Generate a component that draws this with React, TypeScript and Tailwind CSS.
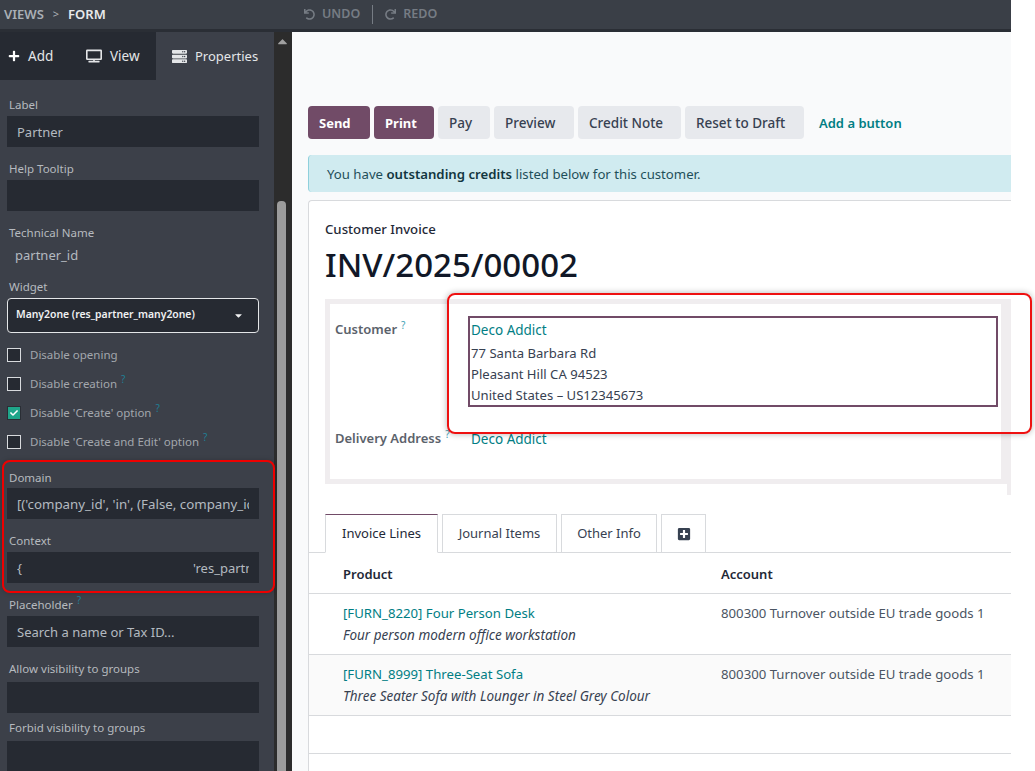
import { FaPlus, FaTv, FaServer, FaUndo, FaRedo, FaPlusSquare, FaCheck, FaCaretDown, FaCaretUp } from "react-icons/fa";

const Field = ({ label, value, help, className = "", gap = "mb-[2px]", size = "text-[13px]" }: { label: string; value?: string; help?: boolean; className?: string; gap?: string; size?: string }) => (
  <div className={className}>
    <div className={`h-5 leading-[22px] pl-[9px] text-[11.5px] text-[#b6babf] ${gap}`}>
      {label}
      {help && <sup className="ml-1 text-[10px] text-[#1f7f95]">?</sup>}
    </div>
    <div className={`ml-[7px] w-[252px] h-[31px] bg-[#262a32] px-[10px] leading-[33px] text-[#b4bac0] ${size}`}>
      <div className="whitespace-nowrap overflow-hidden">{value}</div>
    </div>
  </div>
);

const Check = ({ label, checked, help }: { label: string; checked?: boolean; help?: boolean }) => (
  <div className="flex items-center h-[29px] pl-[7px] text-[11.5px] text-[#a3a7ad]">
    <span className={`w-[14px] h-[14px] mr-[9px] flex items-center justify-center ${checked ? "bg-[#1fa58a] border border-[#2a2e35]" : "bg-[#262a32] border border-[#d8dadd]"}`}>
      {checked && <FaCheck className="text-white text-[8px]" />}
    </span>
    <span className="pt-px">
      {label}
      {help && <sup className="ml-1 text-[10px] text-[#1f7f95]">?</sup>}
    </span>
  </div>
);

const Sidebar = () => (
  <div className="w-[274px] shrink-0 h-full bg-[#3c4049] overflow-hidden">
    <div className="flex h-12 text-[13.5px] text-[#e4e6e8] bg-[#262a32]">
      <div className="w-[72px] flex items-center pl-2 gap-[8px]"><FaPlus className="text-[12px] text-white" /><span className="pt-px">Add</span></div>
      <div className="w-[84px] flex items-center pl-[14px] gap-[8px]"><FaTv className="text-[16px]" /><span className="pt-px">View</span></div>
      <div className="flex-1 flex items-center pl-[16px] gap-[8px] bg-[#3c4049]"><FaServer className="text-[15px]" /><span className="pt-px text-[13px]">Properties</span></div>
    </div>
    <Field label="Label" value="Partner" className="mt-[14px]" />
    <Field label="Help Tooltip" className="mt-[11px]" />
    <div className="mt-[11px] h-5 leading-[22px] pl-[9px] text-[11.5px] text-[#b6babf]">Technical Name</div>
    <div className="mt-[3px] h-5 leading-5 pl-[15px] text-[13px] text-[#b4bac0]">partner_id</div>
    <div className="mt-[11px] h-5 leading-[22px] pl-[9px] text-[11.5px] text-[#b6babf] mb-[2px]">Widget</div>
    <div className="ml-[7px] w-[252px] h-[35px] bg-[#262a32] border border-[#e4e6e8] rounded-[4px] pl-2 pr-[14px] pb-px flex items-center justify-between text-[10.4px] font-semibold text-[#f0f1f2]">
      Many2one (res_partner_many2one)
      <FaCaretDown className="text-[11px]" />
    </div>
    <div className="mt-[7px]">
      <Check label="Disable opening" />
      <Check label="Disable creation" help />
      <Check label="Disable 'Create' option" checked help />
      <Check label="Disable 'Create and Edit' option" help />
    </div>
    <Field label="Domain" value="[('company_id', 'in', (False, company_id))]" className="mt-[11px]" gap="mb-[1px]" size="text-[13.3px]" />
    <div className="mt-[11px]">
      <div className="h-5 leading-[22px] pl-[9px] text-[11.5px] text-[#b6babf] mb-[2px]">Context</div>
      <div className="ml-[7px] w-[252px] h-[31px] bg-[#262a32] px-[10px] leading-[33px] text-[13px] text-[#b4bac0]">
        <div className="whitespace-nowrap overflow-hidden">{"{"}<span className="ml-[171px]">'res_partner'</span></div>
      </div>
    </div>
    <Field label="Placeholder" value="Search a name or Tax ID..." help className="mt-[11px]" />
    <Field label="Allow visibility to groups" className="mt-[11px]" gap="mb-[4px]" />
    <Field label="Forbid visibility to groups" className="mt-[4px]" gap="mb-[4px]" />
  </div>
);

const Scrollbar = () => (
  <div className="w-[18px] shrink-0 h-full bg-[#2c2c2c] relative">
    <FaCaretUp className="absolute left-[1px] top-[-1px] text-[15px] text-[#a0a0a0] mt-[3px]" />
    <div className="absolute left-[3px] top-[169px] w-[9px] bottom-0 bg-[#9c9c9c] rounded-t-[4px]" />
  </div>
);

const buttons = [
  { label: "Pay", width: "w-[52px]" },
  { label: "Preview", width: "w-[80px]" },
  { label: "Credit Note", width: "w-[103px]" },
  { label: "Reset to Draft", width: "w-[119px]" },
];

const rows = [
  { code: "[FURN_8220] Four Person Desk", desc: "Four person modern office workstation", bg: "bg-white" },
  { code: "[FURN_8999] Three-Seat Sofa", desc: "Three Seater Sofa with Lounger in Steel Grey Colour", bg: "bg-[#fafafa]" },
];

const Main = () => (
  <div className="w-[719px] shrink-0 h-full bg-[#f9fafb] pl-4 pt-[74px] text-[13.2px] overflow-hidden">
    <div className="flex items-center gap-1 text-[13px]">
      <button className="h-[33px] w-[62px] pt-[2px] pl-[11px] text-left rounded-[4px] bg-[#714b67] text-white font-bold">Send</button>
      <button className="h-[33px] w-[60px] pt-[2px] pl-[11px] text-left rounded-[4px] bg-[#714b67] text-white font-bold">Print</button>
      {buttons.map((b) => (
        <button key={b.label} className={`h-[33px] pt-[2px] pl-[11px] text-left text-[13.5px] rounded-[4px] bg-[#e7e9ed] text-[#374151] font-medium ${b.width}`}>{b.label}</button>
      ))}
      <span className="ml-[11px] pt-[2px] text-[#017e84] font-semibold text-[13px]">Add a button</span>
    </div>
    <div className="mt-4 h-[37px] flex items-center pl-[18px] pt-[2px] bg-[#d0ebf0] border-l-[1px] border-[#8fd0dc] rounded-l-[4px] text-[#1f4f5a]">
      <span>You have <b className="font-semibold text-[#12363f]">outstanding credits</b> listed below for this customer.</span>
    </div>
    <div className="mt-2 h-[600px] bg-white border-l border-t border-[#d8dadd] rounded-tl-[4px]">
      <div className="pl-4 pt-[18px] text-[13.2px] leading-5 font-medium text-[#1f2937]">Customer Invoice</div>
      <div className="pl-4 mt-[4px] text-[33px] leading-[44px] font-medium text-[#111827]">INV/2025/00002</div>
      <div className="ml-4 mt-[12px] h-[185px] bg-[#f0edef] p-[5px] pr-[10px] relative">
        <div className="h-[175px] bg-white flex flex-col">
          <div className="flex pt-3">
            <div className="w-[138px] pl-[5px] pt-[3px] font-semibold text-[13px] text-[#5b626b] leading-5">Customer<sup className="ml-1 text-[10px] font-normal text-[#3f9fb5]">?</sup></div>
            <div className="w-[530px] h-[91px] border-2 border-[#714b67] pl-[1px] leading-[21px] text-[13.1px] text-[#374151]">
              <div className="text-[#017e84] text-[13.5px] h-[24px] pt-[2px]">Deco Addict</div>
              <div className="mt-[1px]">77 Santa Barbara Rd</div>
              <div>Pleasant Hill CA 94523</div>
              <div>United States – US12345673</div>
            </div>
          </div>
          <div className="flex mt-[21px]">
            <div className="w-[141px] pl-[5px] font-semibold text-[13px] text-[#5b626b] leading-5">Delivery Address<sup className="ml-1 text-[10px] font-normal text-[#3f9fb5]">?</sup></div>
            <div className="text-[#017e84] text-[13.5px] leading-5 pt-px">Deco Addict</div>
          </div>
        </div>
        <div className="absolute right-0 top-full w-[4px] h-[11px] bg-[#f0edef]" />
      </div>
      <div className="mt-[30px] flex h-[39px] gap-1 pl-4 border-b border-[#d8dadd] text-[#374151] text-[13px]">
        <div className="w-[113px] h-[39px] pt-px flex items-center justify-center bg-white border border-[#d8dadd] border-t-[#714b67] border-b-white text-[#1f2937]">Invoice Lines</div>
        <div className="w-[115px] pt-px flex items-center justify-center border border-[#d8dadd] border-b-0">Journal Items</div>
        <div className="w-[96px] pt-px flex items-center justify-center border border-[#d8dadd] border-b-0">Other Info</div>
        <div className="w-[45px] flex items-center justify-center border border-[#d8dadd] border-b-0"><FaPlusSquare className="text-[14px] text-[#374151]" /></div>
      </div>
      <div className="h-[41px] flex items-center pl-[34px] pt-[3px] border-b border-[#d8dadd] font-semibold text-[13px] text-[#1f2937]">
        <span className="w-[378px]">Product</span><span>Account</span>
      </div>
      {rows.map((r) => (
        <div key={r.code} className={`h-[61px] pl-[34px] pt-[9px] flex border-b border-[#d8dadd] ${r.bg}`}>
          <div className="w-[378px]">
            <div className="text-[#017e84] leading-5">{r.code}</div>
            <div className="mt-[2px] italic text-[13.5px] text-[#374151] leading-5">{r.desc}</div>
          </div>
          <div className="text-[#4b5563] leading-5">800300 Turnover outside EU trade goods 1</div>
        </div>
      ))}
      <div className="h-[38px] border-b border-[#d8dadd]" />
    </div>
  </div>
);

export default function App() {
  return (
    <div className="relative w-[1035px] h-[771px] bg-white overflow-hidden" style={{ fontFamily: '"Noto Sans", sans-serif' }}>
      <div className="w-[1011px] h-[29px] bg-[#3a3f47] flex items-center text-[13px] font-semibold">
        <div className="w-[304px] pl-1 flex items-center text-[#aab0b6]">VIEWS<span className="mx-[9px] font-normal text-[11px]">&gt;</span><span className="text-[#e8eaec]">FORM</span></div>
        <div className="flex items-center text-[12.5px] text-[#767c84]">
          <FaUndo className="text-[11px] mr-[7px]" />UNDO
          <span className="mx-[12px] w-[1px] h-[19px] bg-[#767c84]" />
          <FaRedo className="text-[11px] mr-[7px]" />REDO
        </div>
      </div>
      <div className="w-[1011px] h-[3px] bg-[#2a2e35]" />
      <div className="flex w-[1011px] h-[739px]">
        <Sidebar />
        <Scrollbar />
        <Main />
      </div>
      <div className="absolute left-[2px] top-[460px] w-[273px] h-[133px] border-2 border-[#ee0000] rounded-[8px] shadow-[0_0_5px_rgba(0,0,0,0.2)]" />
      <div className="absolute left-[447px] top-[293px] w-[585px] h-[141px] border-2 border-[#ee1111] rounded-[8px] shadow-[0_0_6px_rgba(0,0,0,0.3)]" />
    </div>
  );
}
